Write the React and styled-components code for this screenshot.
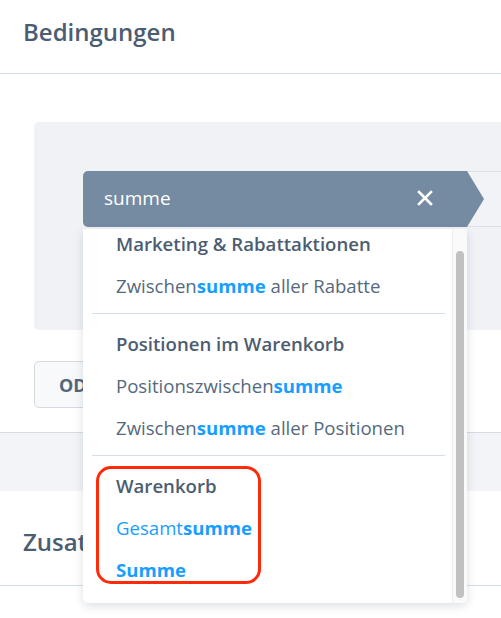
import styled, { createGlobalStyle } from "styled-components";

const GlobalStyle = createGlobalStyle`
  body {
    margin: 0;
    background: #fff;
    font-family: "Open Sans", "Lato", sans-serif;
    color: #52667a;
  }
`;

const Page = styled.div`
  width: 501px;
  height: 618px;
  overflow: hidden;
  position: relative;
`;

const CardHeader = styled.div`
  height: 74px;
  display: flex;
  align-items: center;
  padding: 0 23px 10px;
  box-sizing: border-box;
  border-bottom: 1px solid #d4dee8;
  font-size: 24px;
  font-weight: 600;
  color: #4c5d71;
`;

const CardBody = styled.div`
  padding: 48px 0 24px 34px;
  border-bottom: 1px solid #d6dce3;
`;

const Panel = styled.div`
  height: 208px;
  background: #f0f2f6;
  border-radius: 5px 0 0 5px;
  padding: 49px 0 0 49px;
  box-sizing: border-box;
`;

const Crumbs = styled.div`
  display: flex;
  height: 56px;
`;

const Crumb = styled.div`
  position: relative;
  width: 384px;
  flex: none;
  background: #758ba1;
  border-radius: 5px 0 0 5px;
  display: flex;
  align-items: center;
  justify-content: space-between;
  padding: 0 34px 2px 21px;
  box-sizing: border-box;
  color: #fff;
  font-size: 19px;
  z-index: 2;

  &::after {
    content: "";
    position: absolute;
    right: -17px;
    top: 0;
    width: 17px;
    height: 56px;
    background: #758ba1;
    clip-path: polygon(0 0, 100% 50%, 0 100%);
  }
`;

const NextCrumb = styled.div`
  flex: 1;
  border-top: 1px solid #dde2e8;
  border-bottom: 1px solid #dde2e8;
  background: #f1f3f6;
`;

const HiddenInput = styled.div`
  margin-top: 26px;
  width: 200px;
  height: 50px;
  border-left: 1px solid #d6dce3;
  background: #f6f7f9;
`;

const OrButton = styled.div`
  margin-top: 31px;
  width: 100px;
  height: 47px;
  box-sizing: border-box;
  border: 1px solid #d3dae2;
  border-radius: 5px;
  background: #f8f9fb;
  display: flex;
  align-items: center;
  padding-left: 24px;
  font-size: 18px;
  font-weight: 700;
  color: #52667a;
`;

const Gap = styled.div`
  height: 58px;
  background: #f3f4f7;
`;

const NextHeader = styled(CardHeader)`
  height: 95px;
  padding-top: 6px;
  padding-bottom: 0;
`;

const Dropdown = styled.div`
  position: absolute;
  left: 83px;
  top: 229px;
  width: 384px;
  height: 374px;
  background: #fff;
  border-radius: 0 0 5px 5px;
  box-shadow: 0 3px 10px rgba(40, 60, 80, 0.16);
  display: flex;
  overflow: hidden;
  z-index: 5;
`;

const List = styled.div`
  flex: 1;
  margin-top: -7px;
`;

const Row = styled.div`
  height: 42px;
  display: flex;
  align-items: center;
  padding-left: 33px;
  font-size: 18.6px;
  font-weight: ${(p) => (p.$header ? 600 : 400)};
  color: ${(p) => (p.$active ? "#189eff" : p.$header ? "#4c5d71" : "#55697d")};
  white-space: pre;
`;

const Match = styled.b`
  color: #189eff;
  font-weight: 700;
`;

const Separator = styled.div`
  height: 1px;
  background: #d4dee8;
  margin: 7px 7px 8px 9px;
`;

const Track = styled.div`
  width: 15px;
  flex: none;
  border-left: 1px solid #ececec;
  background: #fafafa;
  padding: 22px 0 5px 3px;
  box-sizing: border-box;
`;

const Thumb = styled.div`
  width: 8px;
  height: 100%;
  border-radius: 4px;
  background: #c1c1c1;
`;

const Annotation = styled.div`
  position: absolute;
  left: 13px;
  top: 237px;
  width: 165px;
  height: 118px;
  box-sizing: border-box;
  border: 3.5px solid #ff2a0a;
  border-radius: 15px;
`;

function CloseIcon() {
  return (
    <svg width="16" height="16" viewBox="0 0 16 16">
      <path d="M2 2 L14 14 M14 2 L2 14" stroke="#fff" strokeWidth="2.6" strokeLinecap="square" />
    </svg>
  );
}

function Hit({ before, match, after }) {
  return (
    <span>
      {before}
      <Match>{match}</Match>
      {after}
    </span>
  );
}

export default function App() {
  return (
    <Page>
      <GlobalStyle />
      <CardHeader>Bedingungen</CardHeader>
      <CardBody>
        <Panel>
          <Crumbs>
            <Crumb>
              <span>summe</span>
              <CloseIcon />
            </Crumb>
            <NextCrumb />
          </Crumbs>
          <HiddenInput />
        </Panel>
        <OrButton>ODER</OrButton>
      </CardBody>
      <Gap />
      <NextHeader>Zusatzbedingungen</NextHeader>

      <Dropdown>
        <List>
          <Row $header>Marketing &amp; Rabattaktionen</Row>
          <Row>
            <Hit before="Zwischen" match="summe" after=" aller Rabatte" />
          </Row>
          <Separator />
          <Row $header>Positionen im Warenkorb</Row>
          <Row>
            <Hit before="Positionszwischen" match="summe" />
          </Row>
          <Row>
            <Hit before="Zwischen" match="summe" after=" aller Positionen" />
          </Row>
          <Separator />
          <Row $header>Warenkorb</Row>
          <Row $active>
            <Hit before="Gesamt" match="summe" />
          </Row>
          <Row $active $header>
            <Match>Summe</Match>
          </Row>
        </List>
        <Track>
          <Thumb />
        </Track>
        <Annotation />
      </Dropdown>
    </Page>
  );
}
